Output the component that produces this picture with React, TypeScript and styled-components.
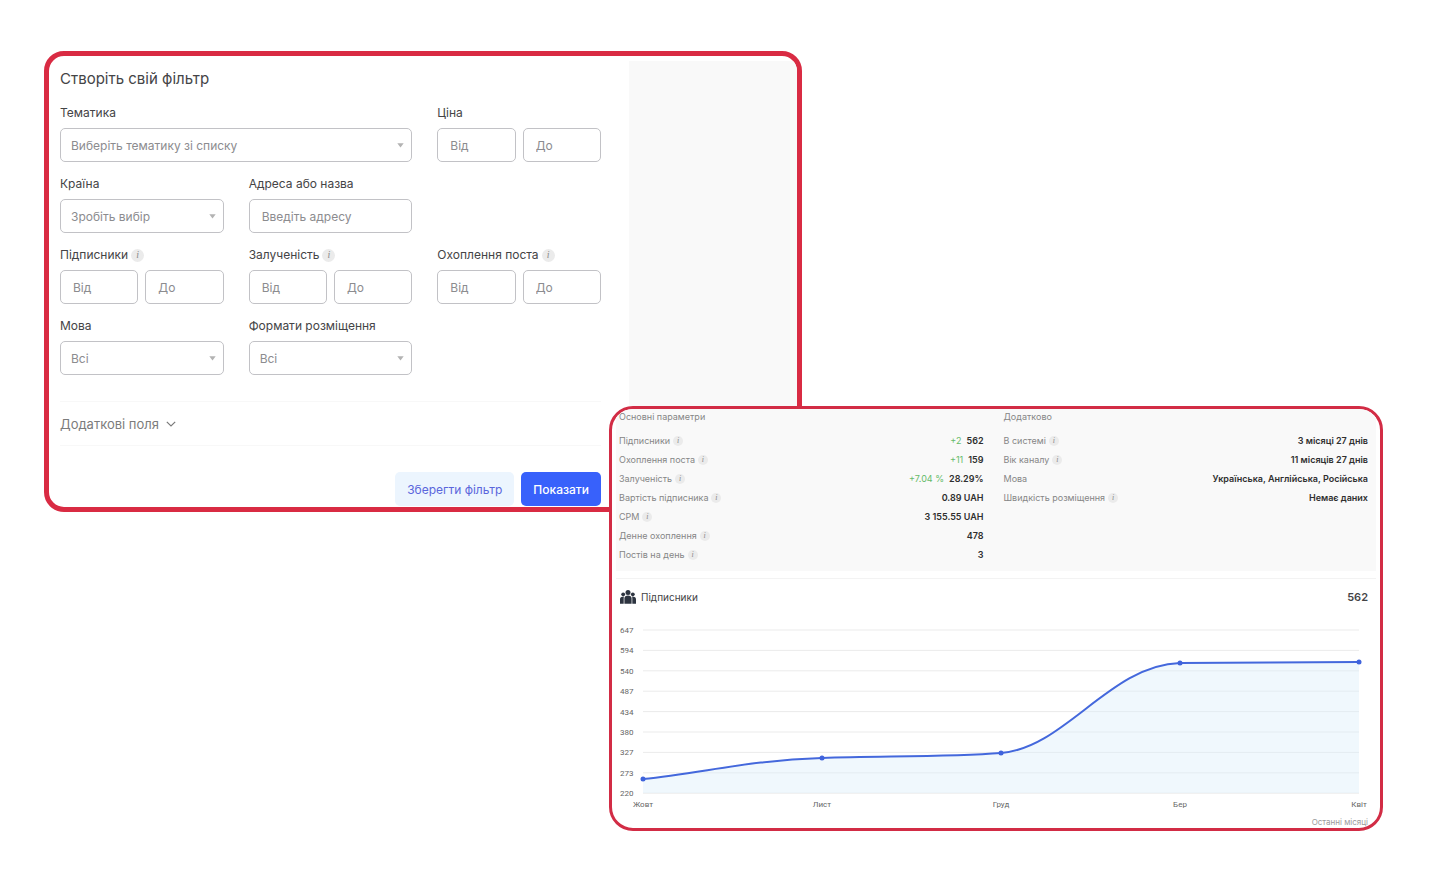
import React from "react";
import styled, { createGlobalStyle } from "styled-components";

const GlobalStyle = createGlobalStyle`
  *, *::before, *::after { box-sizing: border-box; }
  body {
    margin: 0;
    background: #fff;
    font-family: Inter, "Liberation Sans", sans-serif;
    color: #444446;
  }
  button, input, select { font-family: inherit; }
`;

const Page = styled.main`
  display: grid;
  grid-template-columns: minmax(0, 565fr) minmax(0, 193fr) minmax(0, 581fr);
  grid-template-rows: 355px auto;
  padding: 51px 63px 48px 44px;
`;

/* ---------- Filter card ---------- */

const FilterCard = styled.section`
  grid-column: 1 / 3;
  grid-row: 1 / 3;
  align-self: start;
  display: grid;
  grid-template-columns: minmax(0, 580fr) minmax(0, 168fr);
  border: 5px solid #d92b43;
  border-radius: 20px;
  overflow: hidden;
  background: #fff;
`;

const SidePanel = styled.div`
  margin-top: 5px;
  background: #f9f9f9;
`;

const Form = styled.form`
  padding: 13px 28px 1px 11px;
`;

const Title = styled.h1`
  margin: 0 0 14px;
  font-size: 15px;
  line-height: 20px;
  font-weight: 400;
`;

const Fields = styled.div`
  display: grid;
  grid-template-columns: repeat(3, minmax(0, 1fr));
  column-gap: 25px;
  row-gap: 12px;
`;

const FieldGroup = styled.div<{ $wide?: boolean; $endsRow?: boolean }>`
  grid-column: ${(p) => (p.$wide ? "span 2" : p.$endsRow ? "2" : "auto")};
`;

const Caption = styled.div`
  display: flex;
  align-items: center;
  gap: 3px;
  height: 20px;
  margin-bottom: 5px;
  font-size: 12px;
  line-height: 20px;
`;

const Pair = styled.div`
  display: grid;
  grid-template-columns: 1fr 1fr;
  gap: 7px;
`;

const TextInput = styled.input`
  display: block;
  width: 100%;
  min-width: 0;
  height: 34px;
  padding: 0 12px;
  border: 1px solid #c2c2c6;
  border-radius: 5px;
  background: #fff;
  font-size: 12px;
  color: #444446;
  &::placeholder { color: #8c8c8f; opacity: 1; }
`;

const SelectWrap = styled.div`
  position: relative;
`;

const SelectBox = styled.select`
  display: block;
  width: 100%;
  height: 34px;
  padding: 0 24px 0 10px;
  border: 1px solid #c2c2c6;
  border-radius: 5px;
  background: #fff;
  appearance: none;
  font-size: 12px;
  color: #8c8c8f;
`;

const SelectArrow = styled.svg`
  position: absolute;
  top: 15px;
  right: 8px;
  pointer-events: none;
`;

const InfoDot = styled.span<{ $small?: boolean }>`
  display: inline-flex;
  align-items: center;
  justify-content: center;
  flex: none;
  width: ${(p) => (p.$small ? 10 : 13)}px;
  height: ${(p) => (p.$small ? 10 : 13)}px;
  border-radius: 50%;
  background: #ebebeb;
  color: #8a8a8a;
  font-family: "Liberation Serif", serif;
  font-style: italic;
  font-size: ${(p) => (p.$small ? 8 : 10)}px;
  line-height: 10px;
`;

const MoreBar = styled.div`
  display: flex;
  align-items: center;
  height: 45px;
  margin-top: 26px;
  border-top: 1px solid #f8f8f8;
  border-bottom: 1px solid #f8f8f8;
`;

const MoreButton = styled.button`
  display: flex;
  align-items: center;
  gap: 7px;
  padding: 0;
  border: 0;
  background: none;
  font-size: 13px;
  line-height: 20px;
  color: #7c7c7c;
`;

const Actions = styled.div`
  display: flex;
  justify-content: flex-end;
  gap: 7px;
  margin-top: 26px;
`;

const ActionButton = styled.button<{ $primary?: boolean }>`
  height: 34px;
  padding: 0 12px;
  border: 0;
  border-radius: 5px;
  background: ${(p) => (p.$primary ? "#3861fb" : "#ecf5fe")};
  color: ${(p) => (p.$primary ? "#fff" : "#5a66dc")};
  font-size: 12px;
  font-weight: ${(p) => (p.$primary ? 500 : 400)};
`;

/* ---------- Statistics card ---------- */

const StatsCard = styled.section`
  grid-column: 2 / 4;
  grid-row: 2;
  z-index: 1;
  border: 3px solid #d22c45;
  border-radius: 24px;
  overflow: hidden;
  background: #fff;
`;

const Summary = styled.div`
  display: grid;
  grid-template-columns: 1fr 1fr;
  column-gap: 20px;
  margin: 0 4px;
  padding: 1px 8px 7px 3px;
  background: #f9f9f9;
`;

const SummaryTitle = styled.h2`
  margin: 0 0 7px;
  font-size: 9px;
  line-height: 14px;
  font-weight: 400;
  color: #868686;
`;

const List = styled.dl`
  margin: 0;
`;

const Row = styled.div`
  display: flex;
  justify-content: space-between;
  height: 19px;
  font-size: 9px;
  line-height: 19px;
`;

const Term = styled.dt`
  display: flex;
  align-items: center;
  gap: 3px;
  color: #868686;
`;

const Value = styled.dd`
  display: flex;
  gap: 5px;
  margin: 0;
  font-weight: 600;
  color: #2f2f2f;
`;

const Delta = styled.span`
  font-weight: 400;
  color: #66bb6a;
`;

const ChartHead = styled.header`
  display: flex;
  align-items: center;
  gap: 5px;
  height: 37px;
  margin: 7px 4px 0;
  padding: 0 8px 0 4px;
  border-top: 1px solid #f3f3f3;
`;

const ChartTitle = styled.h2`
  flex: 1;
  margin: 0;
  font-size: 10px;
  line-height: 14px;
  font-weight: 400;
`;

const Total = styled.strong`
  font-size: 11px;
  line-height: 14px;
  font-weight: 600;
`;

const Chart = styled.svg`
  display: block;
  width: 100%;
  font-family: Roboto, sans-serif;
  font-size: 8px;
`;

const Footer = styled.p`
  margin: 0;
  padding-right: 12px;
  text-align: right;
  font-size: 8px;
  line-height: 12px;
  color: #9a9a9a;
`;

const Info = ({ small }: { small?: boolean }) => (
  <InfoDot $small={small} aria-hidden="true">i</InfoDot>
);

type DropdownProps = { id: string; label: string; text: string; wide?: boolean };

function Dropdown({ id, label, text, wide }: DropdownProps) {
  return (
    <FieldGroup $wide={wide}>
      <Caption>
        <label htmlFor={id}>{label}</label>
      </Caption>
      <SelectWrap>
        <SelectBox id={id}>
          <option>{text}</option>
        </SelectBox>
        <SelectArrow width="7" height="5" viewBox="0 0 7 5">
          <path d="M0.3 0.3h6.4L3.5 4.6z" fill="#b3b3b3" />
        </SelectArrow>
      </SelectWrap>
    </FieldGroup>
  );
}

function Range({ id, label, info }: { id: string; label: string; info?: boolean }) {
  return (
    <FieldGroup>
      <Caption>
        <label htmlFor={id}>{label}</label>
        {info && <Info />}
      </Caption>
      <Pair>
        <TextInput id={id} placeholder="Від" />
        <TextInput aria-label={`${label} до`} placeholder="До" />
      </Pair>
    </FieldGroup>
  );
}

type Stat = { name: string; value: string; delta?: string; info?: boolean };

const mainStats: Stat[] = [
  { name: "Підписники", value: "562", delta: "+2", info: true },
  { name: "Охоплення поста", value: "159", delta: "+11", info: true },
  { name: "Залученість", value: "28.29%", delta: "+7.04 %", info: true },
  { name: "Вартість підписника", value: "0.89 UAH", info: true },
  { name: "CPM", value: "3 155.55 UAH", info: true },
  { name: "Денне охоплення", value: "478", info: true },
  { name: "Постів на день", value: "3", info: true },
];

const extraStats: Stat[] = [
  { name: "В системі", value: "3 місяці 27 днів", info: true },
  { name: "Вік каналу", value: "11 місяців 27 днів", info: true },
  { name: "Мова", value: "Українська, Англійська, Російська" },
  { name: "Швидкість розміщення", value: "Немає даних", info: true },
];

function StatList({ title, stats }: { title: string; stats: Stat[] }) {
  return (
    <div>
      <SummaryTitle>{title}</SummaryTitle>
      <List>
        {stats.map((s) => (
          <Row key={s.name}>
            <Term>
              {s.name}
              {s.info && <Info small />}
            </Term>
            <Value>
              {s.delta && <Delta>{s.delta}</Delta>}
              {s.value}
            </Value>
          </Row>
        ))}
      </List>
    </div>
  );
}

const ticks = [647, 594, 540, 487, 434, 380, 327, 273, 220];
const points = [
  { label: "Жовт", x: 31, y: 164 },
  { label: "Лист", x: 210, y: 143 },
  { label: "Груд", x: 389, y: 138 },
  { label: "Бер", x: 568, y: 48 },
  { label: "Квіт", x: 747, y: 47 },
];
const curve =
  "M31 164C91 158 138 145 210 143C270 141 338 142 389 138C453 133 498 50 568 48C628 47.6 687 47.2 747 47";

function SubscribersChart() {
  return (
    <Chart viewBox="0 0 768 201" role="img" aria-label="Підписники">
      {ticks.map((t, i) => {
        const y = 15 + i * 20.4;
        return (
          <g key={t}>
            <line x1="31" x2="747" y1={y} y2={y} stroke="#ebebeb" />
            <text x="8" y={y + 3} fill="#666">{t}</text>
          </g>
        );
      })}
      <path d={`${curve}V178H31Z`} fill="#dceffb" fillOpacity="0.42" />
      <path d={curve} fill="none" stroke="#4468dc" strokeWidth="2" />
      {points.map((p) => (
        <g key={p.label}>
          <circle cx={p.x} cy={p.y} r="2.5" fill="#3f63dc" />
          <text x={p.x} y="192" textAnchor="middle" fill="#666">{p.label}</text>
        </g>
      ))}
    </Chart>
  );
}

const PeopleIcon = () => (
  <svg width="16" height="14" viewBox="0 0 16 14" fill="#2d3440" aria-hidden="true">
    <circle cx="8" cy="2.6" r="2.5" />
    <circle cx="3.2" cy="4.3" r="1.9" />
    <circle cx="12.8" cy="4.3" r="1.9" />
    <path d="M4.4 13.8V8.4C4.4 6.6 6 5.6 8 5.6s3.6 1 3.6 2.8v5.4z" />
    <path d="M0 13.8V9.4C0 7.6 1.2 6.6 4 6.6C3.7 7.3 3.7 7.8 3.7 8.4v5.4z" />
    <path d="M16 13.8V9.4C16 7.6 14.8 6.6 12 6.6C12.3 7.3 12.3 7.8 12.3 8.4v5.4z" />
  </svg>
);

export default function App() {
  return (
    <>
      <GlobalStyle />
      <Page>
        <FilterCard>
          <Form onSubmit={(e) => e.preventDefault()}>
            <Title>Створіть свій фільтр</Title>
            <Fields>
              <Dropdown id="topic" label="Тематика" text="Виберіть тематику зі списку" wide />
              <Range id="price" label="Ціна" />
              <Dropdown id="country" label="Країна" text="Зробіть вибір" />
              <FieldGroup $endsRow>
                <Caption>
                  <label htmlFor="address">Адреса або назва</label>
                </Caption>
                <TextInput id="address" placeholder="Введіть адресу" />
              </FieldGroup>
              <RowBreak />
              <Range id="subscribers" label="Підписники" info />
              <Range id="engagement" label="Залученість" info />
              <Range id="reach" label="Охоплення поста" info />
              <Dropdown id="language" label="Мова" text="Всі" />
              <Dropdown id="formats" label="Формати розміщення" text="Всі" />
            </Fields>
            <MoreBar>
              <MoreButton type="button">
                Додаткові поля
                <svg width="10" height="6" viewBox="0 0 10 6" fill="none" stroke="#7c7c7c" strokeWidth="1.2">
                  <path d="M0.8 0.8L5 5L9.2 0.8" />
                </svg>
              </MoreButton>
            </MoreBar>
            <Actions>
              <ActionButton type="button">Зберегти фільтр</ActionButton>
              <ActionButton type="submit" $primary>Показати</ActionButton>
            </Actions>
          </Form>
          <SidePanel />
        </FilterCard>

        <StatsCard>
          <Summary>
            <StatList title="Основні параметри" stats={mainStats} />
            <StatList title="Додатково" stats={extraStats} />
          </Summary>
          <ChartHead>
            <PeopleIcon />
            <ChartTitle>Підписники</ChartTitle>
            <Total>562</Total>
          </ChartHead>
          <SubscribersChart />
          <Footer>Останні місяці</Footer>
        </StatsCard>
      </Page>
    </>
  );
}

const RowBreak = styled.div`
  grid-column: 3;
`;
